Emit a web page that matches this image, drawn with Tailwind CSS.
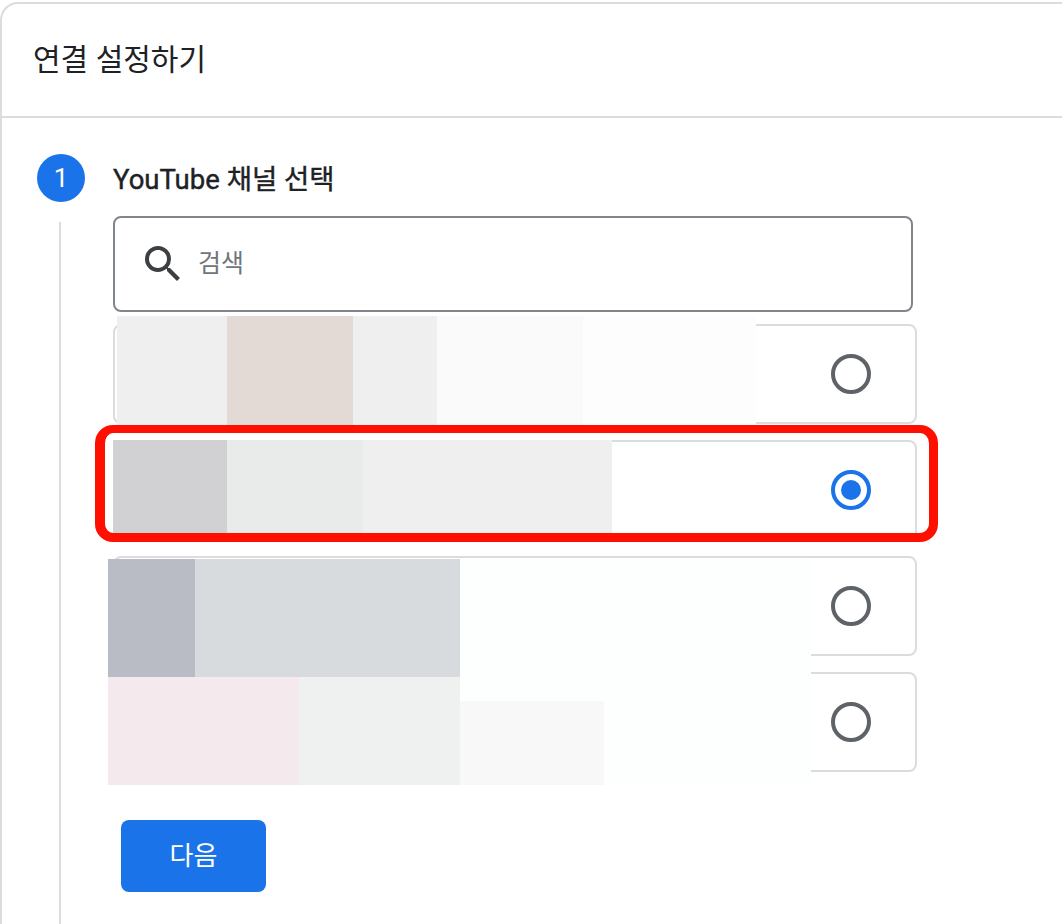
<!DOCTYPE html>
<html lang="ko">
<head>
  <meta charset="UTF-8" />
  <meta name="viewport" content="width=device-width, initial-scale=1.0" />
  <title>연결 설정하기</title>
  <script src="https://cdn.jsdelivr.net/npm/@tailwindcss/browser@4"></script>
</head>
<body class="bg-white text-[#202124] font-['Roboto','Noto_Sans_CJK_KR',sans-serif] overflow-hidden">
  <main class="h-[924px] w-[1062px] pt-[2px] overflow-hidden">
    <div class="h-[1000px] w-[1100px] border-l-2 border-t-2 border-[#dadce0] rounded-tl-[18px]">
      <header class="h-[114px] flex items-center pl-[31px] border-b-2 border-[#dadce0]">
        <h1 class="text-[30px] leading-[36px] font-normal">연결 설정하기</h1>
      </header>

      <section class="pt-[36px]">
        <div class="flex items-center h-[48px] pl-[35px]">
          <div class="w-[48px] h-[48px] rounded-full bg-[#1a73e8] text-white text-[26px] font-normal flex items-center justify-center">1</div>
          <h2 class="ml-[28px] mt-[4px] text-[27.5px] leading-[36px] font-normal [-webkit-text-stroke:0.4px_#202124]">YouTube 채널 선택</h2>
        </div>

        <div class="flow-root ml-[57px] mt-[20px] pl-[52px] border-l-2 border-[#dadce0] h-[720px]">
          <div class="w-[800px] h-[96px] -mt-[6px] border-2 border-[#80868b] rounded-[8px] flex items-center pl-[24px]">
            <svg class="w-[48px] h-[48px] text-[#3c4043]" viewBox="0 0 24 24" fill="currentColor"><path d="M15.5 14h-.79l-.28-.27A6.47 6.47 0 0 0 16 9.5 6.5 6.5 0 1 0 9.5 16c1.61 0 3.09-.59 4.23-1.57l.27.28v.79l5 4.99L20.49 19l-4.99-5zm-6 0C7.01 14 5 11.99 5 9.5S7.01 5 9.5 5 14 7.01 14 9.5 11.99 14 9.5 14z"/></svg>
            <span class="ml-[11px] text-[25px] text-[#70757a]">검색</span>
          </div>

          <div class="relative mt-[12px] w-[804px] flex flex-col gap-[16px]">
            <label class="h-[100px] border-2 border-[#dadce0] rounded-[8px] flex items-center justify-end pr-[44px]">
              <span class="w-[40px] h-[40px] rounded-full border-4 border-[#5f6368]"></span>
            </label>
            <label class="h-[100px] border-2 border-[#dadce0] rounded-[8px] flex items-center justify-end pr-[44px]">
              <span class="w-[40px] h-[40px] rounded-full border-4 border-[#1a73e8] flex items-center justify-center">
                <span class="w-[20px] h-[20px] rounded-full bg-[#1a73e8]"></span>
              </span>
            </label>
            <label class="h-[100px] border-2 border-[#dadce0] rounded-[8px] flex items-center justify-end pr-[44px]">
              <span class="w-[40px] h-[40px] rounded-full border-4 border-[#5f6368]"></span>
            </label>
            <label class="h-[100px] border-2 border-[#dadce0] rounded-[8px] flex items-center justify-end pr-[44px]">
              <span class="w-[40px] h-[40px] rounded-full border-4 border-[#5f6368]"></span>
            </label>

            <!-- blurred channel names -->
            <div class="absolute left-[4px] top-[-8px] h-[109px] flex">
              <div class="w-[110px] bg-[#efefef]"></div>
              <div class="w-[126px] bg-[#e3dad5]"></div>
              <div class="w-[84px] bg-[#efefef]"></div>
              <div class="w-[146px] bg-[#fafafa]"></div>
              <div class="w-[173px] bg-[#fdfdfd]"></div>
            </div>
            <div class="absolute left-0 top-[116px] h-[94px] flex">
              <div class="w-[114px] bg-[#d1d1d3]"></div>
              <div class="w-[136px] bg-[#e9ebea]"></div>
              <div class="w-[249px] bg-[#efefef]"></div>
            </div>
            <div class="absolute left-[-5px] top-[235px] w-[703px] h-[226px] bg-[#fdfefe]">
              <div class="flex h-[118px]">
                <div class="w-[87px] bg-[#b9bcc4]"></div>
                <div class="w-[265px] bg-[#d8dbde]"></div>
              </div>
              <div class="flex h-[108px]">
                <div class="w-[191px] bg-[#f4e9ed]"></div>
                <div class="w-[161px] bg-[#eff1f0]"></div>
                <div class="w-[144px] h-[84px] mt-[24px] bg-[#f8f8f8]"></div>
              </div>
            </div>

            <!-- highlight around selected row -->
            <div class="absolute left-[-18px] top-[101px] w-[843px] h-[117px] border-t-[8px] border-r-[9px] border-b-[9px] border-l-[10px] border-[#ff0f00] rounded-[18px]"></div>
          </div>

          <button class="mt-[48px] ml-[8px] w-[145px] h-[72px] rounded-[8px] bg-[#1a73e8] text-white text-[26px]">다음</button>
        </div>
      </section>
    </div>
  </main>
</body>
</html>
